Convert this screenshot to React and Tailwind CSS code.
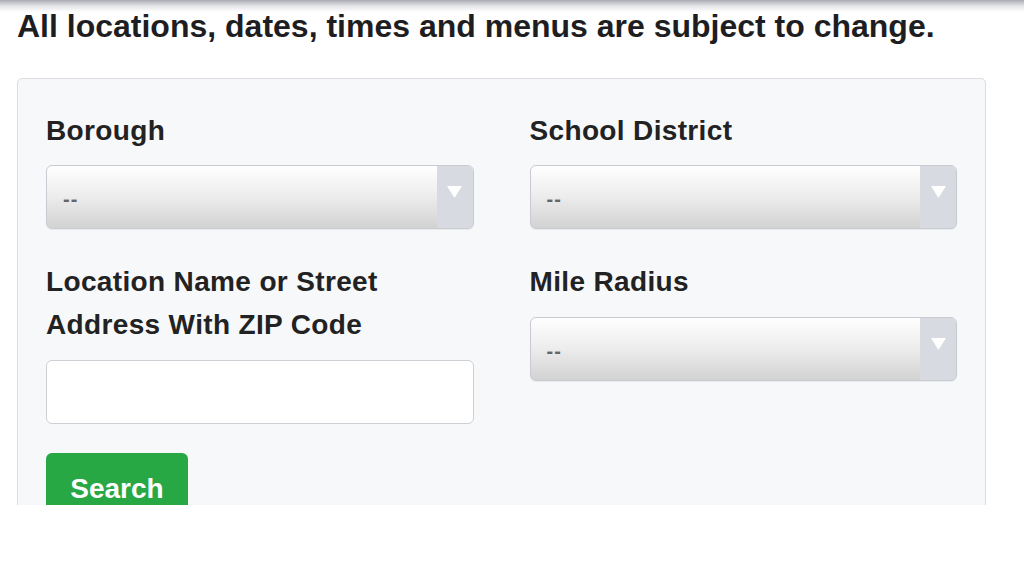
import { useState } from "react";

const Triangle = () => (
  <svg width="17" height="14" viewBox="0 0 17 14" className="block">
    <path d="M1 1 L16 1 L8.5 13 Z" fill="#ffffff" />
  </svg>
);

const FakeSelect = ({ value = "--" }) => (
  <div className="relative flex h-[64px] w-full items-center overflow-hidden rounded-[6px] border border-[#c9cad2] bg-gradient-to-b from-white via-[#ececec] to-[#d2d2d2] shadow-[0_1px_1px_rgba(0,0,0,0.06)]">
    <span className="flex-1 pl-[16px] pt-[4px] text-[20px] font-bold tracking-[1px] text-[#666]">
      {value}
    </span>
    <div className="flex h-full w-[36px] items-start justify-center bg-[#d7dae1] pt-[19px]">
      <Triangle />
    </div>
  </div>
);

const Label = ({ children }) => (
  <label className="block text-[28px] font-bold leading-[43px] tracking-[0.35px] text-[#222]">
    {children}
  </label>
);

export default function App() {
  const [address, setAddress] = useState("");

  return (
    <div
      className="relative h-[576px] w-[1024px] overflow-hidden bg-white"
      style={{ fontFamily: '"Liberation Sans", Arial, sans-serif' }}
    >
      <div className="pointer-events-none absolute left-0 right-0 top-0 h-[12px] bg-gradient-to-b from-[#a9acb4] via-[#e4e5e8] to-white" />

      <div className="h-[505px] overflow-hidden px-[17px] pt-[8px]">
        <h1 className="text-[32px] font-bold leading-[36px] text-[#1e1e22]">
          All locations, dates, times and menus are subject to change.
        </h1>

        <div className="mt-[34px] w-[969px] rounded-[5px] border border-[#dcdde2] bg-[#f7f8fa] px-[28px] pb-[60px] pt-[30px]">
          <div className="grid grid-cols-2 gap-x-[56px]">
            <div>
              <Label>Borough</Label>
              <div className="mt-[13px]">
                <FakeSelect />
              </div>
            </div>
            <div>
              <Label>School District</Label>
              <div className="mt-[13px]">
                <FakeSelect />
              </div>
            </div>

            <div className="mt-[31px]">
              <Label>
                Location Name or Street
                <br />
                Address With ZIP Code
              </Label>
              <input
                value={address}
                onChange={(e) => setAddress(e.target.value)}
                className="mt-[14px] block h-[64px] w-full rounded-[6px] border border-[#cfd0d6] bg-white px-[14px] text-[20px] outline-none"
              />
            </div>
            <div className="mt-[31px]">
              <Label>Mile Radius</Label>
              <div className="mt-[14px]">
                <FakeSelect />
              </div>
            </div>
          </div>

          <button className="mt-[29px] h-[70px] w-[142px] rounded-[6px] bg-[#28a745] pt-[1px] text-[28px] font-bold text-white">
            Search
          </button>
        </div>
      </div>
    </div>
  );
}
